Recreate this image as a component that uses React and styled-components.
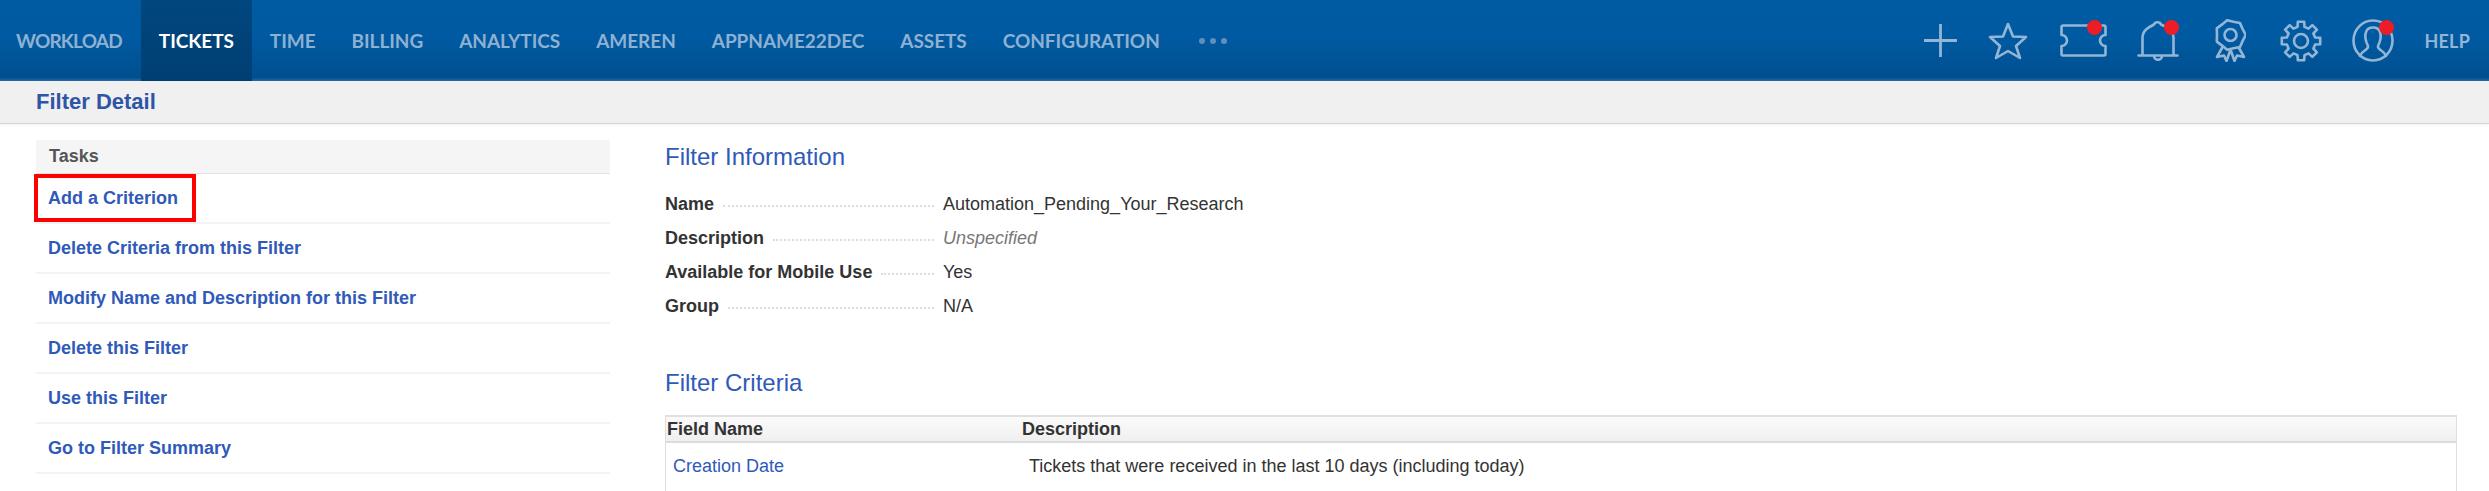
import React from "react";
import styled, { createGlobalStyle } from "styled-components";

const Global = createGlobalStyle`
  html, body { margin: 0; padding: 0; background: #fff; overflow: hidden; height: 491px; }
  body { font-family: "Liberation Sans", Arial, sans-serif; }
`;
const Page = styled.div`width: 2489px; height: 491px; overflow: hidden; display: flex; flex-direction: column;`;
const NavBar = styled.header`
  height: 81px; flex: none; display: flex; align-items: stretch;
  background: linear-gradient(180deg, #005ba3 0%, #005aa1 45%, #004f90 96%, #2a6aa3 100%);
  font-family: Lato, "Liberation Sans", sans-serif;
`;
const NavList = styled.nav`display: flex; align-items: stretch;`;
const NavItem = styled.a`
  display: flex; align-items: center; padding: 0 18px; font-size: 19px; font-weight: 700; letter-spacing: -0.05px;
  color: ${p => (p.$active ? "#ffffff" : "#8db1d3")};
  background: ${p => (p.$active ? "linear-gradient(180deg,#00477f,#003f73)" : "transparent")};
  &:first-child { padding: 0 19px 0 16px; letter-spacing: -0.8px; }
`;
const Dots = styled.div`display: flex; align-items: center; gap: 5px; padding-left: 21px; margin-left: 0;`;
const Dot = styled.span`width: 6px; height: 6px; border-radius: 50%; background: #5f8fbc;`;
const Tools = styled.div`margin-left: auto; display: flex; align-items: center; padding-right: 19px;`;
const Slot = styled.div`
  position: relative; width: ${p => p.$w}px; height: 81px; display: flex; align-items: center; justify-content: center;
  color: #93b6d6;
`;
const Badge = styled.span`
  position: absolute; top: 20px; left: ${p => p.$x}px; width: 15px; height: 15px; border-radius: 50%; background: #ee1c25;
`;
const Help = styled.a`margin-left: 12px; color: #93b6d6; font-size: 18px; font-weight: 700; letter-spacing: 0.2px;`;

const SubHeader = styled.div`
  height: 43px; flex: none; box-sizing: border-box; background: #f0f0f0; border-bottom: 1px solid #d4d4d4;
  padding: 0 0 0 36px; display: flex; align-items: center; box-shadow: 0 1px 3px rgba(0,0,0,.06);
`;
const Title = styled.h1`margin: 0; font-size: 22px; font-weight: 700; color: #2f55a6;`;
const Content = styled.main`flex: 1; display: flex; padding: 16px 32px 0 36px; min-height: 0;`;
const Sidebar = styled.aside`width: 574px; flex: none;`;
const TasksHead = styled.div`
  height: 34px; box-sizing: border-box; background: #f5f5f5; border-bottom: 1px solid #e2e2e2; border-radius: 3px 3px 0 0;
  padding-left: 13px; display: flex; align-items: center; font-size: 18px; font-weight: 700; color: #555;
`;
const TaskRow = styled.div`
  height: 50px; box-sizing: border-box; border-bottom: 2px solid #f3f3f3; padding-left: 12px; display: flex; align-items: center;
  position: relative; font-size: 18px; font-weight: 700; color: #2f5ab9;
`;
const Highlight = styled.span`
  position: absolute; left: -2px; top: 0; width: 162px; height: 48px; box-sizing: border-box; border: 4px solid #ff0000;
`;
const Main = styled.section`flex: 1; margin-left: 55px; min-width: 0;`;
const SectionTitle = styled.h2`
  margin: 0; font-size: 24px; font-weight: 400; color: #2f5ab9; line-height: 34px;
`;
const InfoList = styled.div`margin-top: 13px; display: flex; flex-direction: column;`;
const InfoRow = styled.div`height: 34px; display: flex; align-items: center; font-size: 18px; color: #333;`;
const InfoLabel = styled.div`width: 269px; flex: none; display: flex; align-items: center; font-weight: 700; color: #333;`;
const Leader = styled.span`flex: 1; margin: 4px 0 0 9px; border-bottom: 2px dotted #dcdcdc;`;
const InfoValue = styled.div`
  margin-left: 9px;
  ${p => p.$muted && "font-style: italic; color: #777;"}
`;
const CriteriaBlock = styled.div`margin-top: 43px;`;
const Table = styled.div`
  margin-top: 15px; width: 1792px; height: 90px; box-sizing: border-box; border: 1px solid #e0e0e0; border-top-width: 2px;
  font-size: 18px; color: #333;
`;
const THead = styled.div`
  height: 24px; display: grid; grid-template-columns: 355px 1fr; align-items: center; padding-left: 1px;
  border-bottom: 2px solid #dcdcdc; background: linear-gradient(180deg, #fbfbfb, #efefef); font-weight: 700;
`;
const TRow = styled.div`
  display: grid; grid-template-columns: 355px 1fr; padding: 13px 0 0 7px;
`;
const CellLink = styled.a`color: #2f5ab9;`;
const CellText = styled.div`padding-left: 1px;`;

const Svg = ({ w, h, vb, children }) => (
  <svg width={w} height={h} viewBox={vb} fill="none" stroke="currentColor" strokeWidth="2.6" strokeLinejoin="round" strokeLinecap="round">{children}</svg>
);
const gearPath = () => {
  const pts = [];
  const n = 8;
  for (let i = 0; i < n; i++) {
    const a = (i / n) * Math.PI * 2 - Math.PI / 2;
    const s = Math.PI / n;
    const p = (r, t) => `${(21 + r * Math.cos(t)).toFixed(1)} ${(21 + r * Math.sin(t)).toFixed(1)}`;
    pts.push(`${i ? "L" : "M"}${p(19.5, a - s * 0.42)}`, `L${p(19.5, a + s * 0.42)}`, `L${p(14.5, a + s * 0.62)}`, `L${p(14.5, a + s * 1.38)}`);
  }
  return pts.join(" ") + " Z";
};
const ribbonPath = () => {
  const pts = [];
  const n = 14;
  for (let i = 0; i < n; i++) {
    const a = (i / n) * Math.PI * 2;
    const r = i % 2 ? 13.5 : 15.2;
    pts.push(`${i ? "L" : "M"}${(15.5 + r * Math.cos(a)).toFixed(1)} ${(16 + r * Math.sin(a)).toFixed(1)}`);
  }
  return pts.join(" ") + " Z";
};

const navItems = ["WORKLOAD", "TICKETS", "TIME", "BILLING", "ANALYTICS", "AMEREN", "APPNAME22DEC", "ASSETS", "CONFIGURATION"];
const tasks = ["Add a Criterion", "Delete Criteria from this Filter", "Modify Name and Description for this Filter", "Delete this Filter", "Use this Filter", "Go to Filter Summary"];
const info = [
  ["Name", "Automation_Pending_Your_Research"],
  ["Description", "Unspecified", true],
  ["Available for Mobile Use", "Yes"],
  ["Group", "N/A"],
];

export default function App() {
  return (
    <Page>
      <Global />
      <NavBar>
        <NavList>
          {navItems.map(n => <NavItem key={n} $active={n === "TICKETS"}>{n}</NavItem>)}
          <Dots><Dot /><Dot /><Dot /></Dots>
        </NavList>
        <Tools>
          <Slot $w={68}>
            <Svg w={33} h={33} vb="0 0 33 33"><path d="M16.5 0V33M0 16.5H33" strokeLinecap="butt" strokeWidth="2.8" /></Svg>
          </Slot>
          <Slot $w={68}>
            <Svg w={40} h={38} vb="0 0 40 38"><path d="M20 2 L25 14.5 L38 15 L28 24 L32 36 L20 29 L8 36 L12 24 L2 15 L15 14.5 Z" /></Svg>
          </Slot>
          <Slot $w={82}>
            <Svg w={47} h={33} vb="0 0 47 33"><path d="M3 1.5H44a1.5 1.5 0 0 1 1.5 1.5V11a5.5 5.5 0 0 0 0 11V30a1.5 1.5 0 0 1-1.5 1.5H3A1.5 1.5 0 0 1 1.5 30V22a5.5 5.5 0 0 0 0-11V3A1.5 1.5 0 0 1 3 1.5Z" /></Svg>
            <Badge $x={45} />
          </Slot>
          <Slot $w={68}>
            <Svg w={42} h={41} vb="0 0 42 41"><path d="M1.5 35.5H40.500M5.500 35.500V18C5.500 10 12 7 17 4.500C18 1.500 23 1.500 24 4.500C30 7 36.500 10 36.500 18V35.500M17 36C17 41 25 41 25 36" /></Svg>
            <Badge $x={40} />
          </Slot>
          <Slot $w={76}>
            <Svg w={31} h={43} vb="0 0 31 43"><path d={ribbonPath()} /><circle cx="15.500" cy="16" r="6" /><path d="M7 29L2 38L9 36.500L11.500 42L15 32M24 29L29 38L22 36.500L19.500 42L16 32" /></Svg>
          </Slot>
          <Slot $w={66}>
            <Svg w={42} h={42} vb="0 0 42 42"><path d={gearPath()} /><circle cx="21" cy="21" r="7" /></Svg>
          </Slot>
          <Slot $w={78}>
            <Svg w={42} h={43} vb="0 0 42 43"><ellipse cx="21" cy="21.500" rx="19.500" ry="20" /><path d="M8 37C10 31 17 31 16 27C14 23 12.500 17 14 13C16 7 26 7 28 13C29.500 17 28 23 26 27C25 31 32 31 34 37" /></Svg>
            <Badge $x={45} />
          </Slot>
          <Help>HELP</Help>
        </Tools>
      </NavBar>
      <SubHeader><Title>Filter Detail</Title></SubHeader>
      <Content>
        <Sidebar>
          <TasksHead>Tasks</TasksHead>
          {tasks.map((t, i) => (
            <TaskRow key={t}>{i === 0 && <Highlight />}{t}</TaskRow>
          ))}
        </Sidebar>
        <Main>
          <SectionTitle>Filter Information</SectionTitle>
          <InfoList>
            {info.map(([k, v, m]) => (
              <InfoRow key={k}>
                <InfoLabel>{k}<Leader /></InfoLabel>
                <InfoValue $muted={m}>{v}</InfoValue>
              </InfoRow>
            ))}
          </InfoList>
          <CriteriaBlock>
            <SectionTitle>Filter Criteria</SectionTitle>
            <Table>
              <THead><div>Field Name</div><div>Description</div></THead>
              <TRow>
                <CellLink>Creation Date</CellLink>
                <CellText>Tickets that were received in the last 10 days (including today)</CellText>
              </TRow>
            </Table>
          </CriteriaBlock>
        </Main>
      </Content>
    </Page>
  );
}
